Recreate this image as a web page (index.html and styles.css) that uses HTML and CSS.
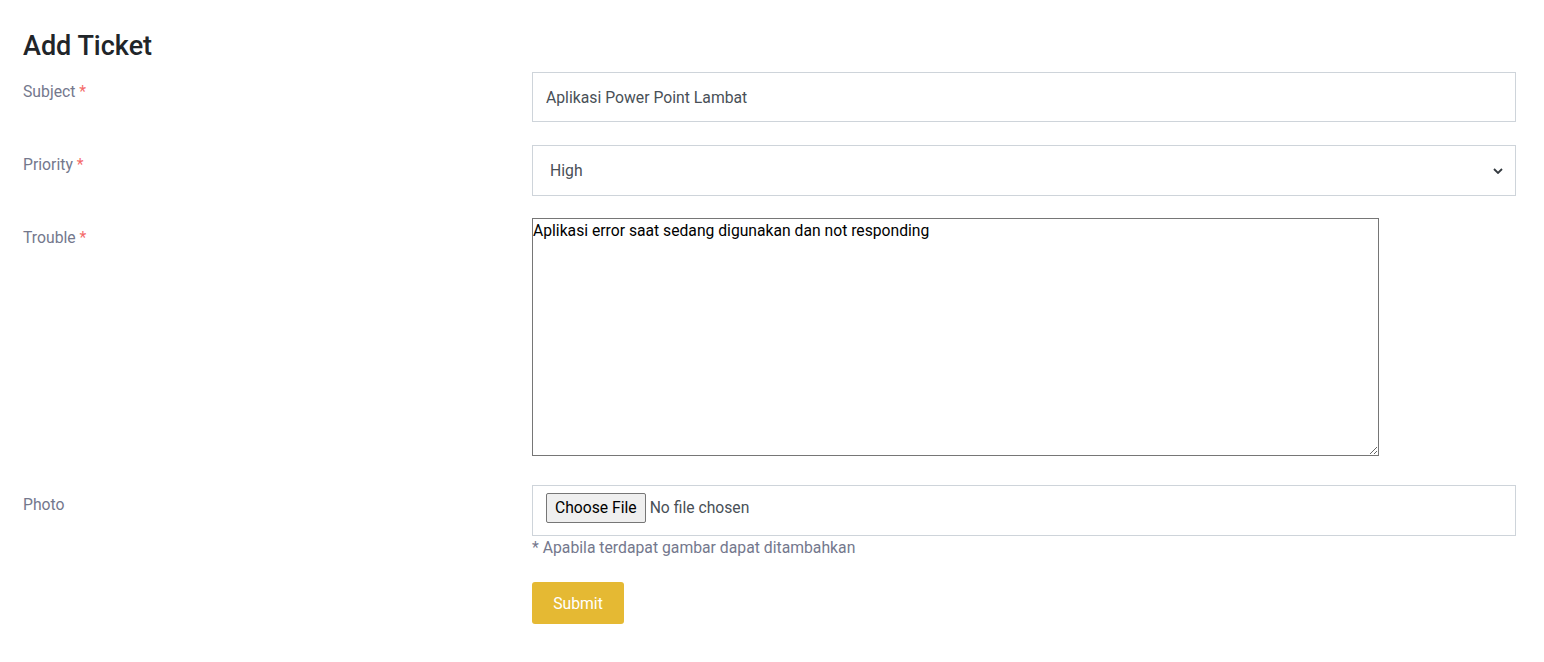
FILE: index.html
```html
<!DOCTYPE html>
<html>
<head>
<meta charset="utf-8">
<link rel="stylesheet" href="styles.css">
</head>
<body>
<div class="page">
  <h1 class="title">Add Ticket</h1>
  <form class="form">
    <div class="row">
      <label class="label">Subject <span class="req">*</span></label>
      <div class="field"><input class="control" type="text" value="Aplikasi Power Point Lambat"></div>
    </div>
    <div class="row row-sel">
      <label class="label">Priority <span class="req">*</span></label>
      <div class="field">
        <div class="select">
          <span class="select-text">High</span>
          <svg class="chev" width="10" height="6" viewBox="0 0 10 6"><path d="M1 1l4 4 4-4" fill="none" stroke="#343a40" stroke-width="1.8"/></svg>
        </div>
      </div>
    </div>
    <div class="row row-ta">
      <label class="label">Trouble <span class="req">*</span></label>
      <div class="field"><textarea class="ta">Aplikasi error saat sedang digunakan dan not responding</textarea></div>
    </div>
    <div class="row row-photo">
      <label class="label">Photo</label>
      <div class="field">
        <div class="control file">
          <span class="file-btn">Choose File</span>
          <span class="file-text">No file chosen</span>
        </div>
        <div class="help">* Apabila terdapat gambar dapat ditambahkan</div>
        <button type="button" class="submit">Submit</button>
      </div>
    </div>
  </form>
</div>
</body>
</html>
```
FILE: styles.css
```css
* { box-sizing: border-box; }
body {
  margin: 0;
  font-family: Roboto, "Liberation Sans", sans-serif;
  background: #fff;
  color: #495057;
}
.page {
  padding: 29px 28px 0 23px;
}
.title {
  margin: 0 0 9px;
  font-size: 27px;
  font-weight: 500;
  color: #212529;
  line-height: 34px;
}
.row {
  display: grid;
  grid-template-columns: 509px 1fr;
  margin-bottom: 23px;
}
.row-sel { margin-bottom: 22px; }
.row-ta { margin-bottom: 29px; }
.label {
  font-size: 15.75px;
  color: #74788d;
  padding-top: 9px;
  line-height: 22px;
}
.req { color: #f46a6a; }
.control {
  display: block;
  width: 100%;
  height: 50px;
  border: 1px solid #ced4da;
  padding: 0 13px;
  font-family: Roboto, "Liberation Sans", sans-serif;
  font-size: 15.75px;
  color: #495057;
  background: #fff;
  outline: none;
}
.select {
  height: 51px;
  border: 1px solid #ced4da;
  display: flex;
  align-items: center;
  justify-content: space-between;
  padding: 0 12px 0 17px;
  font-size: 15.75px;
  color: #495057;
}
.chev { display: block; }
.ta {
  display: block;
  width: 847px;
  height: 238px;
  border: 1px solid #767676;
  padding: 2px 0 0;
  margin: 0;
  font-family: Roboto, "Liberation Sans", sans-serif;
  font-size: 15.7px;
  color: #000;
  resize: both;
  outline: none;
}
.file {
  height: 51px;
  display: flex;
  align-items: flex-start;
  padding-top: 7px;
  gap: 4px;
  font-size: 15.7px;
}
.file-btn {
  height: 30px;
  padding: 0 8px 1px;
  display: flex;
  align-items: center;
  border: 1px solid #767676;
  border-radius: 2px;
  background: #efefef;
  color: #000;
}
.file-text {
  color: #495057;
  line-height: 29px;
}
.help {
  margin-top: 1px;
  font-size: 15.75px;
  color: #74788d;
  line-height: 22px;
}
.submit {
  margin-top: 23px;
  width: 92px;
  height: 42px;
  border: none;
  border-radius: 3px;
  background: #e5b933;
  color: #fff;
  font-family: Roboto, "Liberation Sans", sans-serif;
  font-size: 15.75px;
}
```
